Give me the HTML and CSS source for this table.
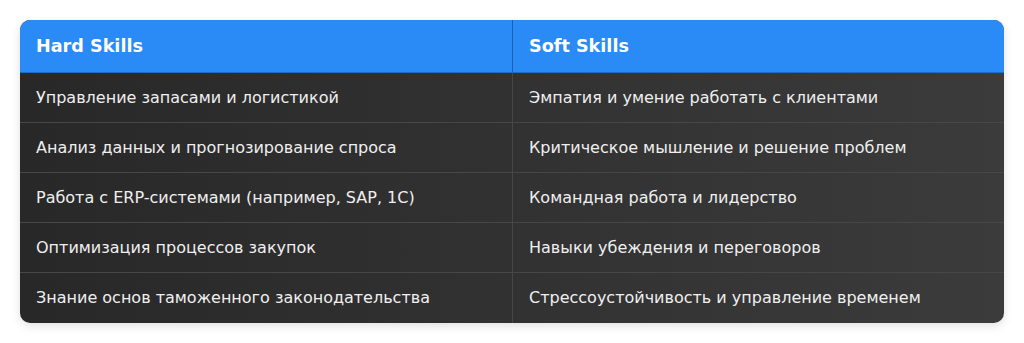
FILE: index.html
```html
<!DOCTYPE html>
<html lang="ru">
<head>
<meta charset="utf-8">
<title>Навыки</title>
<link rel="stylesheet" href="styles.css">
</head>
<body>
<div class="page">
  <table class="skills">
    <thead>
      <tr>
        <th>Hard Skills</th>
        <th>Soft Skills</th>
      </tr>
    </thead>
    <tbody>
      <tr>
        <td>Управление запасами и логистикой</td>
        <td>Эмпатия и умение работать с клиентами</td>
      </tr>
      <tr>
        <td>Анализ данных и прогнозирование спроса</td>
        <td>Критическое мышление и решение проблем</td>
      </tr>
      <tr>
        <td>Работа с ERP-системами (например, SAP, 1C)</td>
        <td>Командная работа и лидерство</td>
      </tr>
      <tr>
        <td>Оптимизация процессов закупок</td>
        <td>Навыки убеждения и переговоров</td>
      </tr>
      <tr>
        <td>Знание основ таможенного законодательства</td>
        <td>Стрессоустойчивость и управление временем</td>
      </tr>
    </tbody>
  </table>
</div>
</body>
</html>
```

FILE: styles.css
```css
html, body {
  margin: 0;
  background: #ffffff;
}

.page {
  padding: 20px;
  font-family: "DejaVu Sans", "Noto Sans", sans-serif;
}

.skills {
  width: 100%;
  border-collapse: separate;
  border-spacing: 0;
  border-radius: 10px;
  overflow: hidden;
  background: linear-gradient(to right, #282828, #3b3b3b);
  box-shadow: 0 3px 10px rgba(0, 0, 0, 0.12);
  table-layout: fixed;
}

.skills th {
  background: #2a8af6;
  color: #ffffff;
  font-size: 17.6px;
  font-weight: bold;
  text-align: left;
  padding: 16px 16px;
  line-height: 20px;
  border-bottom: 1px solid #1f6cc4;
}

.skills th + th {
  border-left: 1px solid #1c5fae;
}

.skills td {
  color: #efefef;
  font-size: 16px;
  text-align: left;
  padding: 15px 16px;
  line-height: 19px;
  border-bottom: 1px solid #474747;
}

.skills td + td {
  border-left: 1px solid #474747;
}

.skills tbody tr:last-child td {
  border-bottom: none;
  padding-bottom: 16px;
}
```
